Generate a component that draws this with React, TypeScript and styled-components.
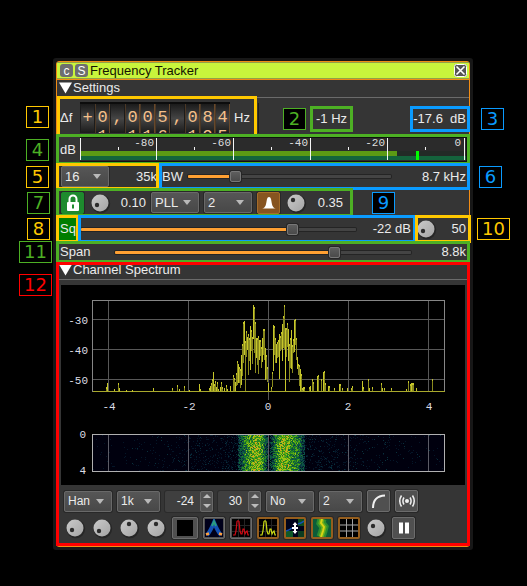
import React, { useState } from 'react';
import styled, { createGlobalStyle } from 'styled-components';

const YELLOW = '#ffc800';
const GREEN = '#4db024';
const BLUE = '#0a9bff';
const RED = '#ff0000';

const GlobalStyle = createGlobalStyle`
  *, *::before, *::after { box-sizing: border-box; }
  body {
    margin: 0;
    background: #000;
    color: #ebebeb;
    font: 13px/16px "Liberation Sans", Arial, sans-serif;
  }
  button, input, select { font: inherit; color: inherit; margin: 0; }
`;

const Page = styled.main`
  padding: 58px 54px 37px 53px;
`;

const WindowShell = styled.section`
  border: 3px solid #171717;
  background: #171717;
  border-radius: 3px;
`;

const WindowBody = styled.div`
  border: 1px solid #f28c14;
  border-radius: 3px;
  background: #353535;
`;

const TitleBar = styled.header`
  display: flex;
  align-items: center;
  gap: 2px;
  height: 18px;
  padding: 0 2px 0 3px;
  background: #c8f53c;
  border-bottom: 1px solid #f28c14;
  box-shadow: inset 0 1px #93a048, inset 0 -1px #93a048;
  color: #141400;
`;

const TitleText = styled.h1`
  flex: 1;
  margin: 0;
  font-size: 13px;
  font-weight: 400;
  line-height: 16px;
`;

const TitleButton = styled.button`
  display: grid;
  place-items: center;
  width: 13px;
  height: 13px;
  padding: 0;
  border: 0;
  border-radius: 3px;
  background: #6e6e6e;
  color: #fff;
  font-size: 12px;
  line-height: 12px;
`;

const SectionHead = styled.h2`
  display: flex;
  align-items: center;
  gap: 1px;
  height: 18px;
  margin: 0;
  padding: 0 2px 2px;
  border-bottom: 1px solid #6b6b6b;
  font-size: 13px;
  font-weight: 400;
  line-height: 16px;
`;

const Row = styled.div<{ $h: number; $gap?: number; $pl?: number; $pr?: number }>`
  position: relative;
  display: flex;
  align-items: center;
  gap: ${(p) => p.$gap ?? 5}px;
  height: ${(p) => p.$h}px;
  padding-left: ${(p) => p.$pl ?? 4}px;
  padding-right: ${(p) => p.$pr ?? 3}px;
`;

const Frame = styled.div<{ $c: string; $l?: number; $r?: number; $w?: number; $y?: number }>`
  position: absolute;
  z-index: 2;
  top: ${(p) => p.$y ?? -1}px;
  bottom: ${(p) => p.$y ?? -1}px;
  left: ${(p) => (p.$l === undefined ? 'auto' : p.$l + 'px')};
  right: ${(p) => (p.$r === undefined ? 'auto' : p.$r + 'px')};
  width: ${(p) => (p.$w ? p.$w + 'px' : 'auto')};
  border: 3px solid ${(p) => p.$c};
  pointer-events: none;
`;

const Tag = styled.span<{ $c: string; $l?: number; $r?: number; $top?: string }>`
  position: absolute;
  z-index: 3;
  top: ${(p) => p.$top ?? 'calc(50% - 11px)'};
  left: ${(p) => (p.$l === undefined ? 'auto' : p.$l + 'px')};
  right: ${(p) => (p.$r === undefined ? 'auto' : p.$r + 'px')};
  min-width: 23px;
  height: 22px;
  padding: 0 4px;
  border: 1px solid ${(p) => p.$c};
  background: #000;
  color: ${(p) => p.$c};
  font: 18px/20px "DejaVu Sans", sans-serif;
  text-align: center;
`;

const TuneGroup = styled.div`
  position: relative;
  display: flex;
  align-items: center;
  width: 200px;
  height: 37px;
  padding-top: 2px;
  padding-left: 3px;
  gap: 4px;
`;

const ShortLabel = styled.span`
  width: 16px;
`;

const TuneRow = styled.div`
  position: relative;
  display: flex;
  height: 37px;
`;

const Readouts = styled.div`
  display: flex;
  flex: 1;
  align-items: center;
  justify-content: space-between;
  margin: 5px 0 2px 1px;
  padding: 2px 3px 0 57px;
  border-left: 1px solid #1c1c1c;
`;

const Readout = styled.output`
  position: relative;
  white-space: pre;
`;

const Wheels = styled.div`
  display: flex;
  height: 31px;
  border-top: 2px solid #0c0c0c;
  background: #222;
  overflow: hidden;
`;

const Wheel = styled.span<{ $flat: boolean }>`
  display: flex;
  flex-direction: column;
  justify-content: center;
  width: 15px;
  padding-bottom: 3px;
  border-right: 1px solid ${(p) => (p.$flat ? '#1c1c1c' : '#67482a')};
  border-left: 1px solid ${(p) => (p.$flat ? '#1c1c1c' : '#4b3826')};
  background: linear-gradient(#1b1b1b, #454545 50%, #1b1b1b);
  color: #f5c08a;
  font: 17px/19px "Liberation Mono", monospace;
  text-align: center;
`;

const Value = styled.output<{ $w: number }>`
  flex: none;
  width: ${(p) => p.$w}px;
  text-align: right;
  white-space: nowrap;
`;

const RangeInput = styled.input<{ $fill: number }>`
  flex: 1;
  min-width: 0;
  height: 13px;
  appearance: none;
  background: transparent;
  &::-webkit-slider-runnable-track {
    height: 3px;
    border-radius: 1px;
    background: linear-gradient(to right, #ffa032 ${(p) => p.$fill}%, #444 ${(p) => p.$fill}%);
    box-shadow: 0 0 0 1px #242424;
  }
  &::-webkit-slider-thumb {
    appearance: none;
    width: 11px;
    height: 11px;
    margin-top: -4px;
    border: 1px solid #777;
    border-radius: 2px;
    background: linear-gradient(#5e5e5e, #4a4a4a);
    box-shadow: 0 0 0 1px #262626;
  }
`;

const SelectWrap = styled.span<{ $w: number; $small?: boolean }>`
  position: relative;
  flex: none;
  width: ${(p) => p.$w}px;
  height: 21px;
  &::after {
    content: '';
    position: absolute;
    right: 8px;
    top: 8px;
    border: 4px solid transparent;
    border-top: 5px solid #b9b9b9;
    border-bottom: 0;
    pointer-events: none;
  }
  select {
    display: block;
    width: 100%;
    height: 100%;
    padding: 0 0 0 3px;
    appearance: none;
    border: 1px solid #696969;
    border-radius: 2px;
    background: linear-gradient(#565656, #484848);
    box-shadow: 0 0 0 1px #282828;
    font-size: ${(p) => (p.$small ? 12 : 13)}px;
  }
`;

const SpinWrap = styled.span<{ $w: number }>`
  display: grid;
  flex: none;
  grid-template-columns: 1fr 13px;
  width: ${(p) => p.$w}px;
  height: 21px;
  border-radius: 2px;
  background: #3f3f3f;
  box-shadow: 0 0 0 1px #2b2b2b;
  input {
    min-width: 0;
    padding: 0 6px 0 0;
    border: 0;
    background: transparent;
    font-size: 12px;
    text-align: right;
    appearance: textfield;
  }
  input::-webkit-inner-spin-button { appearance: none; }
`;

const Steps = styled.span`
  display: grid;
  grid-template-rows: 1fr 1fr;
  border: 1px solid #696969;
  border-radius: 2px;
  background: #525252;
  button {
    display: grid;
    place-items: center;
    padding: 0;
    border: 0;
    background: transparent;
  }
  svg { display: block; }
`;

const IconButton = styled.button<{ $w?: number; $tone?: 'green' | 'brown' | 'rim' }>`
  display: grid;
  place-items: center;
  flex: none;
  width: ${(p) => p.$w ?? 23}px;
  height: 22px;
  padding: 0;
  border: ${(p) => (p.$tone === 'rim' ? '2px solid #955e1e' : '1px solid #6c6c6c')};
  border-color: ${(p) => (p.$tone === 'green' ? '#1c8a2c' : p.$tone === 'brown' ? '#a56c2a' : undefined)};
  border-radius: 2px;
  background: ${(p) => (p.$tone === 'green' ? '#1e8a2e' : p.$tone === 'brown' ? '#875420' : '#505050')};
  box-shadow: 0 0 0 1px #282828;
  svg { display: block; }
`;

const KnobWrap = styled.span`
  position: relative;
  flex: none;
  width: 22px;
  height: 22px;
  svg { display: block; }
  input {
    position: absolute;
    inset: 0;
    width: 22px;
    height: 22px;
    opacity: 0;
  }
`;

const SquelchButton = styled.button`
  flex: none;
  width: 18px;
  height: 22px;
  padding: 0 0 0 1px;
  border: 0;
  background: #007d00;
  text-align: left;
`;

const SpanLabel = styled.span`
  width: 50px;
`;

const MeterSvg = styled.svg`
  display: block;
  flex: 1;
  min-width: 0;
  height: auto;
`;

const SpectrumPanel = styled.section`
  position: relative;
`;

const SpectrumView = styled.div`
  margin: 5px 4px 0;
  background: #000;
`;

const FullSvg = styled.svg`
  display: block;
  width: 100%;
  height: auto;
`;

const Controls = styled.div`
  display: flex;
  flex-direction: column;
  gap: 5px;
  padding: 5px 3px 7px 7px;
`;

const ControlRow = styled.div`
  display: flex;
  align-items: center;
  gap: 5px;
  height: 22px;
`;

function Slider({ label, start }: { label: string; start: number }) {
  const [v, setV] = useState(start);
  return (
    <RangeInput type="range" min={0} max={100} aria-label={label} value={v} $fill={v} onChange={(e) => setV(+e.target.value)} />
  );
}

function Select({ label, value, w, small }: { label: string; value: string; w: number; small?: boolean }) {
  return (
    <SelectWrap $w={w} $small={small}>
      <select aria-label={label} defaultValue={value}>
        <option>{value}</option>
      </select>
    </SelectWrap>
  );
}

function Spin({ label, start, w }: { label: string; start: number; w: number }) {
  const [v, setV] = useState(start);
  return (
    <SpinWrap $w={w}>
      <input type="number" aria-label={label} value={v} onChange={(e) => setV(+e.target.value)} />
      <Steps>
        <button type="button" aria-label={`${label} up`} onClick={() => setV(v + 1)}>
          <svg width="8" height="4"><path d="M0 4L4 0L8 4Z" fill="#bcbcbc" /></svg>
        </button>
        <button type="button" aria-label={`${label} down`} onClick={() => setV(v - 1)}>
          <svg width="8" height="4"><path d="M0 0L4 4L8 0Z" fill="#bcbcbc" /></svg>
        </button>
      </Steps>
    </SpinWrap>
  );
}

function Knob({ label, dot }: { label: string; dot: [number, number] }) {
  return (
    <KnobWrap>
      <svg width="22" height="22" viewBox="0 0 22 22" aria-hidden="true">
        <defs>
          <linearGradient id="knob" x1="0" y1="0" x2="1" y2="1">
            <stop offset="0" stopColor="#cacaca" />
            <stop offset="1" stopColor="#a4a4a4" />
          </linearGradient>
        </defs>
        <circle cx="11.8" cy="11.8" r="9.4" fill="#262626" />
        <circle cx="11" cy="11" r="8.5" fill="url(#knob)" />
        <circle cx={dot[0]} cy={dot[1]} r="2.2" fill="#2c2c2c" />
      </svg>
      <input type="range" aria-label={label} />
    </KnobWrap>
  );
}

const Triangle = () => (
  <svg width="13" height="12" viewBox="0 0 13 12" aria-hidden="true">
    <path d="M0 0.5H13L6.5 11.5Z" fill="#fff" />
  </svg>
);

const MAJOR = [0.5, 76.5, 153.5, 230.5, 307.5, 384.5];

function Meter() {
  return (
    <MeterSvg viewBox="0 0 388 25" role="img" aria-label="Channel power">
      <rect width="388" height="25" fill="#101010" />
      <rect y="1" width="386" height="23" fill="#2b2b2b" />
      <rect y="14" width="317" height="5" fill="#5c9a14" />
      <rect x="317" y="14" width="68" height="5" fill="#232b26" />
      <rect y="19" width="386" height="4" fill="#14643c" />
      {MAJOR.map((x) => <path key={x} d={`M${x} 1V23`} stroke="#f4f4f4" />)}
      {MAJOR.slice(0, 5).map((x) => <path key={x} d={`M${x + 38} 10V13`} stroke="#f4f4f4" />)}
      <rect x="336" y="14" width="3" height="9" fill="#00fa00" />
      <g fill="#dedede" fontFamily="Liberation Mono, monospace" fontSize="11" textAnchor="end">
        <text x="74" y="9">-80</text>
        <text x="151" y="9">-60</text>
        <text x="228" y="9">-40</text>
        <text x="305" y="9">-20</text>
        <text x="381" y="9">0</text>
      </g>
    </MeterSvg>
  );
}

/* Spectrum samples in view units: column, peak, lower end of the stroke. */
const BASE = 106;
const TRACE: [number, number, number?][] = [
  [45, 102], [46, 98], [53, 104], [57, 98], [58, 103], [65, 105], [71, 105], [92, 103], [111, 103], [116, 100], [118, 104],
  [123, 101], [128, 105], [138, 99], [139, 104], [148, 103], [149, 101], [150, 98], [151, 94], [152, 87], [153, 99], [154, 96],
  [155, 102], [156, 97], [157, 104], [159, 102], [160, 97], [161, 102], [163, 103], [165, 100], [166, 104], [169, 101],
  [172, 90], [173, 93], [174, 97], [175, 88, 101], [176, 76, 100], [177, 79, 98], [178, 82, 98], [179, 84, 103], [180, 70, 100],
  [181, 59, 91], [182, 37, 78], [183, 36, 70], [184, 56, 106], [185, 46, 72], [186, 52, 65], [187, 49, 90], [188, 53, 76],
  [189, 41, 85], [190, 45, 66], [191, 52, 79], [192, 20, 54], [193, 22, 68], [194, 37, 88], [195, 53, 73], [196, 53, 80],
  [197, 51, 89], [198, 55, 75], [199, 55, 71], [200, 62, 83], [201, 53, 77], [202, 44, 70], [203, 44, 75], [204, 63, 95],
  [205, 70, 94], [206, 82, 97], [207, 98, 106],
  [210, 102, 106], [211, 87, 102], [212, 40, 86], [213, 41, 70], [214, 53, 78], [215, 59, 78], [216, 57, 73], [217, 55, 72],
  [218, 49, 94], [219, 51, 66], [220, 47, 64], [221, 39, 76], [222, 31, 63], [223, 20, 64], [224, 43, 106], [225, 43, 72],
  [226, 38, 62], [227, 44, 76], [228, 59, 97], [229, 53, 83], [230, 45, 84], [231, 60, 88], [232, 54, 68], [233, 35, 67],
  [234, 34, 60], [235, 53, 75], [236, 72, 84], [237, 79, 90], [238, 80, 101], [239, 84, 106], [240, 89, 106],
  [241, 103], [242, 102], [243, 102], [248, 102], [249, 101], [251, 94], [252, 97], [256, 91], [257, 90], [260, 94],
  [262, 87], [263, 86], [264, 98], [267, 101], [268, 101], [273, 103], [278, 99], [279, 99], [281, 103], [286, 103],
  [290, 103], [291, 101], [301, 96], [302, 102], [307, 94], [308, 103], [311, 102], [320, 98], [321, 103], [323, 103],
  [330, 103], [345, 104], [347, 96], [349, 99], [350, 98], [351, 98], [352, 98], [355, 103], [371, 94],
];

const WATER_COLORS = ['#041628', '#08303c', '#0c4a4a', '#0f6438', '#2a8a20', '#58a814', '#9cc414', '#d8a41c'];

function buildWaterfall(): string[] {
  const out: string[] = WATER_COLORS.map(() => '');
  let seed = 7321;
  const rnd = () => {
    seed = (seed * 1103515245 + 12345) % 2147483648;
    return seed / 2147483648;
  };
  const band = (x: number, c: number, half: number) => Math.max(0, Math.min(1, (half - Math.abs(x - c)) / 8));
  const peak = (x: number, c: number) => Math.exp(-((x - c) ** 2) / 50);
  for (let x = 0; x < 352; x++) {
    const inner = Math.max(band(x, 160, 16), band(x, 194, 18));
    const core = Math.max(peak(x, 163), peak(x, 191));
    const skirt = Math.exp(-Math.abs(x - 176) / 50);
    for (let y = 0; y < 37; y++) {
      const r = rnd();
      let level = -1;
      if (inner > 0.05) level = Math.floor(inner * (3 + core * 2) + r * 4 - 1);
      else if (r < skirt * 0.45) level = r < skirt * 0.08 ? 1 : 0;
      if (level >= 0) out[Math.min(7, level)] += `M${32 + x} ${149 + y}h1v1h-1z`;
    }
  }
  return out;
}
const WATERFALL = buildWaterfall();
const GRID_X = [47.5, 127.5, 207.5, 287.5, 367.5];

function Spectrum() {
  return (
    <FullSvg viewBox="0 0 404 200" role="img" aria-label="Channel spectrum and waterfall">
      <g shapeRendering="crispEdges">
        <g stroke="#585858">
          {GRID_X.map((x) => <path key={x} d={`M${x} 15V107`} />)}
          {[34.5, 64.5, 94.5].map((y) => <path key={y} d={`M32 ${y}H384`} />)}
          <path d="M207.5 107V115" />
        </g>
        <rect x="31.5" y="15.5" width="352" height="91" fill="none" stroke="#868686" />
        <path d={`M32 ${BASE}.5H384`} stroke="#a8a82c" />
        {TRACE.map(([x, top, bottom = BASE], i) => (
          <g key={x}>
            <path d={`M${x}.5 ${top}V${bottom}`} stroke={i % 3 === 1 ? '#c6c62a' : '#8a8a1e'} />
            <path d={`M${x}.5 ${top}v2`} stroke="#c6c62a" />
          </g>
        ))}
        <rect x="32" y="149" width="352" height="37" fill="#00000e" />
        {WATERFALL.map((d, i) => <path key={i} d={d} fill={WATER_COLORS[i]} />)}
        <g stroke="#5c5c66">
          {GRID_X.map((x) => <path key={x} d={`M${x} 149V186`} />)}
        </g>
        <rect x="31.5" y="149.5" width="352" height="37" fill="none" stroke="#b0b0b0" />
      </g>
      <g fill="#dcdce4" fontFamily="Liberation Mono, monospace" fontSize="11">
        <g textAnchor="end">
          <text x="27" y="39">-30</text>
          <text x="27" y="69">-40</text>
          <text x="27" y="99">-50</text>
          <text x="25" y="153">0</text>
          <text x="25" y="189">4</text>
        </g>
        <g textAnchor="middle">
          <text x="48" y="125">-4</text>
          <text x="128" y="125">-2</text>
          <text x="207" y="125">0</text>
          <text x="287" y="125">2</text>
          <text x="368" y="125">4</text>
        </g>
      </g>
    </FullSvg>
  );
}

const DIGITS = '+0,005,084'.split('');
const isDigit = (c: string) => c >= '0' && c <= '9';
const turn = (c: string, by: number) => (isDigit(c) ? String((+c + by + 10) % 10) : '\u00a0');

const TraceIcon = ({ color }: { color: string }) => (
  <svg width="18" height="18" viewBox="0 0 18 18">
    <rect width="18" height="18" fill="#000" />
    <path d="M6.5 0V18M12.5 0V18M0 6.5H18M0 12.5H18" stroke="#242424" />
    <path d="M1 16H3L4 12L5 2.500Q6 1 7 2.500L8 12L9 15H10L11 10H12L13 15L14 13L15 12L16 16H17" fill="none" stroke={color} strokeWidth="1.200" />
  </svg>
);

export default function App() {
  return (
    <>
      <GlobalStyle />
      <Page>
        <WindowShell>
          <WindowBody>
            <TitleBar>
              <TitleButton type="button">c</TitleButton>
              <TitleButton type="button">S</TitleButton>
              <TitleText>Frequency Tracker</TitleText>
              <TitleButton type="button" aria-label="Close">
                <svg width="13" height="13" viewBox="0 0 13 13">
                  <rect x="0.5" y="0.5" width="12" height="12" rx="2" fill="#555" stroke="#fff" />
                  <path d="M2.500 2.500L10.500 10.500M10.500 2.500L2.500 10.500" stroke="#fff" strokeWidth="1.600" />
                </svg>
              </TitleButton>
            </TitleBar>

            <SectionHead><Triangle />Settings</SectionHead>

            <TuneRow>
              <TuneGroup>
                <ShortLabel>Δf</ShortLabel>
                <Wheels role="group" aria-label="Frequency shift">
                  {DIGITS.map((c, i) => (
                    <Wheel key={i} $flat={!isDigit(c)}>
                      <span aria-hidden="true">{turn(c, -1)}</span>
                      <span>{c}</span>
                      <span aria-hidden="true">{turn(c, 1)}</span>
                    </Wheel>
                  ))}
                </Wheels>
                <span>Hz</span>
                <Frame $c={YELLOW} $l={0} $r={0} $y={-2} />
                <Tag $c={YELLOW} $l={-31}>1</Tag>
              </TuneGroup>
              <Readouts>
                <Readout>
                  -1 Hz
                  <Frame $c={GREEN} $l={-6} $r={-6} $y={-5} />
                  <Tag $c={GREEN} $l={-33}>2</Tag>
                </Readout>
                <Readout>
                  {'-17.6  dB'}
                  <Frame $c={BLUE} $l={-3} $r={-4} $y={-5} />
                  <Tag $c={BLUE} $r={-38}>3</Tag>
                </Readout>
              </Readouts>
            </TuneRow>

            <Row $h={29} $gap={4} $pl={3} $pr={1}>
              <ShortLabel>dB</ShortLabel>
              <Meter />
              <Frame $c={GREEN} $l={-1} $r={-1} />
              <Tag $c={GREEN} $l={-31}>4</Tag>
            </Row>

            <Row $h={25}>
              <Select label="Decimation" value="16" w={48} />
              <Value $w={43}>35k</Value>
              <span>BW</span>
              <Slider label="Bandwidth" start={22} />
              <Value $w={70}>8.7 kHz</Value>
              <Frame $c={YELLOW} $l={-1} $w={103} />
              <Frame $c={BLUE} $l={102} $r={-1} />
              <Tag $c={YELLOW} $l={-31}>5</Tag>
              <Tag $c={BLUE} $r={-33}>6</Tag>
            </Row>

            <Row $h={27}>
              <IconButton type="button" $tone="green" aria-label="Tracking lock">
                <svg width="14" height="18" viewBox="0 0 14 18">
                  <path d="M3.500 9V5a3.500 3.500 0 0 1 7 0V9" fill="none" stroke="#fff" strokeWidth="2" />
                  <rect x="1" y="8" width="12" height="9" rx="1" fill="#fff" />
                  <path d="M7 10.500V14.500" stroke="#1e8a2e" strokeWidth="2" />
                </svg>
              </IconButton>
              <Knob label="Alpha" dot={[8, 13]} />
              <Value $w={30}>0.10</Value>
              <Select label="Tracking type" value="PLL" w={48} />
              <Select label="PSK order" value="2" w={48} />
              <IconButton type="button" $tone="brown" aria-label="Root raised cosine">
                <svg width="14" height="13" viewBox="0 0 14 13">
                  <path d="M0 12.500C4 12 4 8 5 3Q5.500 1 7 1T9 3C10 8 10 12 14 12.500Z" fill="#fff" />
                </svg>
              </IconButton>
              <Knob label="Rolloff" dot={[8, 8]} />
              <Value $w={31}>0.35</Value>
              <Frame $c={GREEN} $l={-1} $w={297} />
              <Tag $c={GREEN} $l={-30}>7</Tag>
              <Tag $c={BLUE} $r={74}>9</Tag>
            </Row>

            <Row $h={26} $gap={4} $pl={2}>
              <SquelchButton type="button">Sq</SquelchButton>
              <Slider label="Squelch level" start={78} />
              <Value $w={51}>-22 dB</Value>
              <Knob label="Squelch gate" dot={[8, 13]} />
              <Value $w={25}>50</Value>
              <Frame $c={YELLOW} $l={-1} $w={23} />
              <Frame $c={BLUE} $l={21} $r={53} />
              <Frame $c={YELLOW} $r={-2} $w={56} />
              <Tag $c={YELLOW} $l={-30}>8</Tag>
              <Tag $c={YELLOW} $r={-41}>10</Tag>
            </Row>

            <Row $h={20} $pl={3}>
              <SpanLabel>Span</SpanLabel>
              <Slider label="Span" start={75} />
              <Value $w={50}>8.8k</Value>
              <Frame $c={GREEN} $l={-1} $r={-1} />
              <Tag $c={GREEN} $l={-38}>11</Tag>
            </Row>

            <SpectrumPanel>
              <SectionHead><Triangle />Channel Spectrum</SectionHead>
              <SpectrumView><Spectrum /></SpectrumView>
              <Controls>
                <ControlRow>
                  <Select small label="FFT window" value="Han" w={48} />
                  <Select small label="FFT size" value="1k" w={43} />
                  <Spin label="Reference level" start={-24} w={48} />
                  <Spin label="Range" start={30} w={43} />
                  <Select small label="Averaging mode" value="No" w={48} />
                  <Select small label="Averages" value="2" w={43} />
                  <IconButton type="button" aria-label="Linear or log scale">
                    <svg width="16" height="16" viewBox="0 0 16 16">
                      <path d="M2 15Q2 3 14 2.500" fill="none" stroke="#f0f0f0" strokeWidth="2" />
                    </svg>
                  </IconButton>
                  <IconButton type="button" aria-label="Spectrum server">
                    <svg width="18" height="14" viewBox="0 0 18 14" fill="none" stroke="#f0f0f0" strokeWidth="1.500">
                      <circle cx="9" cy="7" r="2" fill="#f0f0f0" stroke="none" />
                      <path d="M6 3.500Q3.800 7 6 10.500M12 3.500Q14.200 7 12 10.500M3.500 1.500Q0 7 3.500 12.500M14.500 1.500Q18 7 14.500 12.500" />
                    </svg>
                  </IconButton>
                </ControlRow>
                <ControlRow>
                  <Knob label="Decay" dot={[8, 13]} />
                  <Knob label="Decay divisor" dot={[8, 14]} />
                  <Knob label="Stroke" dot={[11, 7]} />
                  <Knob label="Trace intensity" dot={[11, 7]} />
                  <IconButton type="button" $w={26} aria-label="Grid colour">
                    <svg width="16" height="16"><rect width="16" height="16" fill="#000" /></svg>
                  </IconButton>
                  <IconButton type="button" $w={22} aria-label="Phosphor histogram">
                    <svg width="18" height="18" viewBox="0 0 18 18">
                      <rect width="18" height="18" fill="#00001a" />
                      <path d="M2 16Q5 13 9 3.500Q13 13 16 16" fill="none" stroke="#1450b4" strokeWidth="4" />
                      <path d="M7 7L9 2.500L11 7" fill="none" stroke="#2b9c80" strokeWidth="2" />
                      <path d="M1 15.500L4 14.500M14 14.500L17 15.500" stroke="#ffa03c" strokeWidth="2.500" />
                    </svg>
                  </IconButton>
                  <IconButton type="button" $w={22} aria-label="Maximum trace"><TraceIcon color="#d20a14" /></IconButton>
                  <IconButton type="button" $w={22} $tone="rim" aria-label="Current trace"><TraceIcon color="#ccdc14" /></IconButton>
                  <IconButton type="button" $w={22} $tone="rim" aria-label="Waterfall inversion">
                    <svg width="18" height="18" viewBox="0 0 18 18">
                      <rect width="18" height="18" fill="#00041c" />
                      <rect x="12" width="6" height="7" fill="#0c4c20" />
                      <rect y="12" width="7" height="6" fill="#0f5a28" />
                      <rect x="12" y="12" width="6" height="6" fill="#0c3c20" />
                      <path d="M0 12Q4 11 6 9M12 5Q15 4 18 2" fill="none" stroke="#1450b4" strokeWidth="1.500" />
                      <path d="M9 3L11.500 6H10V12H11.500L9 15L6.500 12H8V6H6.500Z" fill="#fff" />
                      <path d="M6 9H12" stroke="#fff" strokeWidth="2" />
                    </svg>
                  </IconButton>
                  <IconButton type="button" $w={22} $tone="rim" aria-label="Waterfall">
                    <svg width="18" height="18" viewBox="0 0 18 18">
                      <rect width="18" height="18" fill="#0c5c38" />
                      <path d="M9 0L8 4L11 8L10 12L8 18" fill="none" stroke="#2c8c30" strokeWidth="9" />
                      <path d="M9 0L8 4L11 8L10 12L8 18" fill="none" stroke="#68ac1c" strokeWidth="5" />
                      <path d="M9 0L8 4L11 8L10 12L8 18" fill="none" stroke="#d8d414" strokeWidth="2" />
                    </svg>
                  </IconButton>
                  <IconButton type="button" $w={22} $tone="rim" aria-label="Grid">
                    <svg width="18" height="18" viewBox="0 0 18 18">
                      <rect width="18" height="18" fill="#000" />
                      <path d="M0 6H18M0 12H18" stroke="#555" strokeWidth="2" />
                      <path d="M6.500 0V18M12.500 0V18" stroke="#a0a0a0" />
                    </svg>
                  </IconButton>
                  <Knob label="Grid intensity" dot={[8, 9]} />
                  <IconButton type="button" aria-label="Pause">
                    <svg width="10" height="12"><path d="M0 0.500H4V11.500H0ZM6 0.500H10V11.500H6Z" fill="#fff" /></svg>
                  </IconButton>
                </ControlRow>
              </Controls>
              <Frame $c={RED} $l={-1} $r={-1} $y={0} />
              <Tag $c={RED} $l={-38} $top="12px">12</Tag>
            </SpectrumPanel>
          </WindowBody>
        </WindowShell>
      </Page>
    </>
  );
}
